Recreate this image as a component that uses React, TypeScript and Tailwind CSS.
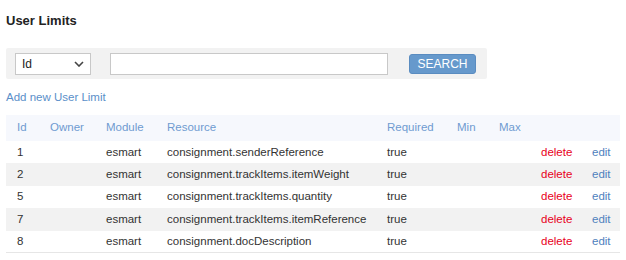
import React from "react";

const rows = [
  { id: "1", module: "esmart", resource: "consignment.senderReference", req: "true" },
  { id: "2", module: "esmart", resource: "consignment.trackItems.itemWeight", req: "true" },
  { id: "5", module: "esmart", resource: "consignment.trackItems.quantity", req: "true" },
  { id: "7", module: "esmart", resource: "consignment.trackItems.itemReference", req: "true" },
  { id: "8", module: "esmart", resource: "consignment.docDescription", req: "true" },
];

const cols = "grid grid-cols-[33px_56px_61px_220px_70px_42px_42px_51px_28px] items-center";

export default function App() {
  return (
    <div className="w-[626px] h-[260px] bg-white text-[#333] font-['Liberation_Sans',Arial,sans-serif] text-[11.5px] overflow-hidden">
      <div className="pl-[6px] pt-[13px]">
        <h1 className="text-[13px] font-bold leading-[16px] text-[#222]">User Limits</h1>
        <div className="mt-[19px] w-[481px] h-[31px] bg-[#f2f2f2] rounded-[2px] flex items-center pl-[9px]">
          <div className="w-[76px] h-[22px] border border-[#c8c8c8] bg-white flex items-center justify-between pl-[6px] pr-[6px]">
            <span className="text-[12px] text-[#222]">Id</span>
            <svg width="10" height="6" viewBox="0 0 10 6" className="mt-[1px]">
              <path d="M1 1 L5 5 L9 1" fill="none" stroke="#444" strokeWidth="1.6" />
            </svg>
          </div>
          <div className="ml-[19px] w-[278px] h-[22px] border border-[#c8c8c8] bg-white" />
          <button className="ml-[21px] w-[67px] h-[20px] bg-[#6699cc] border border-[#5a8cc0] rounded-[3px] text-white text-[12px] leading-none flex items-center justify-center">
            SEARCH
          </button>
        </div>
        <div className="mt-[11px] text-[11.5px] text-[#5b8fc9] leading-[14px]">Add new User Limit</div>
        <div className="mt-[11px] w-[614px]">
          <div className={`${cols} h-[26px] bg-[#f6f8fd] text-[#6f9bd1] pl-[11px]`}>
            <span>Id</span>
            <span>Owner</span>
            <span>Module</span>
            <span>Resource</span>
            <span>Required</span>
            <span>Min</span>
            <span>Max</span>
            <span></span>
            <span></span>
          </div>
          {rows.map((r, i) => (
            <div
              key={r.id}
              className={`${cols} h-[22.4px] pl-[11px] ${i % 2 === 1 ? "bg-[#f2f2f2]" : "bg-white"} ${i === rows.length - 1 ? "border-b border-[#e6e6e6]" : ""}`}
            >
              <span>{r.id}</span>
              <span></span>
              <span>{r.module}</span>
              <span>{r.resource}</span>
              <span>{r.req}</span>
              <span></span>
              <span></span>
              <span className="text-[#e8001c]">delete</span>
              <span className="text-[#4f81bd]">edit</span>
            </div>
          ))}
        </div>
      </div>
    </div>
  );
}
